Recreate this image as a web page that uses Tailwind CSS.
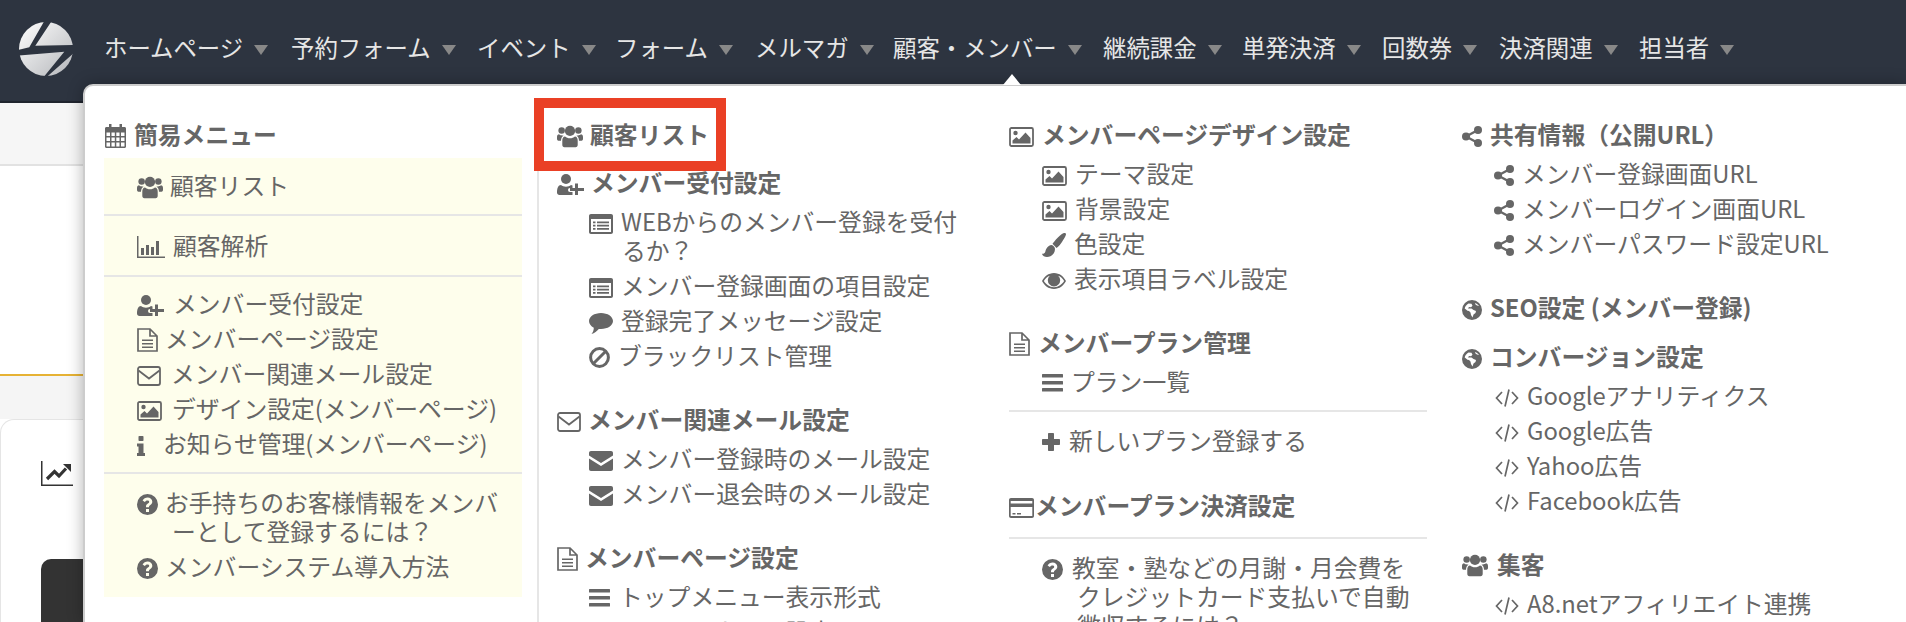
<!DOCTYPE html>
<html lang="ja">
<head>
  <meta charset="UTF-8" />
  <meta name="viewport" content="width=device-width, initial-scale=1.0"/>
  <title>顧客・メンバー</title>
  <script src="https://cdn.jsdelivr.net/npm/@tailwindcss/browser@4"></script>
</head>
<body class="relative h-[622px] overflow-hidden bg-white text-[23.8px] leading-[29px] text-[#666] font-['Noto_Sans_CJK_JP','Noto_Sans',sans-serif]">

  <!-- icon set -->
  <svg class="hidden">
    <symbol id="i-users" viewBox="0 0 28 24"><circle cx="14" cy="6.500" r="5.500"/><circle cx="5" cy="6" r="3.500"/><circle cx="23" cy="6" r="3.500"/><path d="M8 24c-1.500 0-2.300-1-2.300-2.500V17c0-2.500 1-4.500 3-4.500 1.300 1.200 3.200 2 5.300 2s4-.8 5.300-2c2 0 3 2 3 4.500v4.500c0 1.500-.8 2.500-2.300 2.500zM0 13c0-1.500 1-2.800 2.200-2.800 .8 .8 2 1.300 3.300 1.300l1.500-.1C5.500 12.500 4.300 14.300 4.300 17H1.500C.5 17 0 16 0 15zM28 13c0-1.500-1-2.800-2.200-2.800-.8 .8-2 1.300-3.300 1.300l-1.500-.1c1.500 1.100 2.700 2.900 2.700 5.600h2.800c1 0 1.500-1 1.500-2z"/></symbol>
    <symbol id="i-calendar" viewBox="0 0 21 24"><path fill-rule="evenodd" d="M4 0h2.500v3h8V0H17v3h2.500C20.400 3 21 3.600 21 4.500v18c0 .9-.6 1.500-1.500 1.500h-18C.6 24 0 23.400 0 22.500v-18C0 3.600 .6 3 1.500 3H4zM1.500 8.500V12H5V8.500zm5 0V12h3.300V8.500zm4.800 0V12h3.200V8.500zm4.700 0V12h3.500V8.500zm-14.500 5V17H5v-3.500zm5 0V17h3.300v-3.500zm4.800 0V17h3.200v-3.500zm4.700 0V17h3.500v-3.500zm-14.500 5v4H5v-4zm5 0v4h3.300v-4zm4.800 0v4h3.200v-4zm4.700 0v4h3.500v-4z"/></symbol>
    <symbol id="i-user-plus" viewBox="0 0 27 21"><circle cx="9" cy="5" r="5"/><path d="M0 18.500c0-4 1.200-7.500 4-7.500 1.300 1.100 3 1.700 5 1.700s3.700-.6 5-1.700l1.500 .5V14h-2.500a1.800 1.800 0 0 0 0 4h2.500v3H2.500C1 21 0 20 0 18.500z"/><path d="M18 9.500h3v4.500h6v3h-6v4h-3v-4h-5v-3h5z"/></symbol>
    <symbol id="i-file" viewBox="0 0 21 24"><path fill="none" stroke="currentColor" stroke-width="1.700" d="M1 1h12l7 7v15H1zM13 1v7h7"/><path d="M5 11.500h11v1.500H5zM5 15h11v1.500H5zM5 18.500h11V20H5z"/></symbol>
    <symbol id="i-envelope-o" viewBox="0 0 24 20"><rect x="1" y="1" width="22" height="18" rx="2" fill="none" stroke="currentColor" stroke-width="1.800"/><path d="M1.500 4.500 12 12.500 22.500 4.500" fill="none" stroke="currentColor" stroke-width="1.800"/></symbol>
    <symbol id="i-envelope" viewBox="0 0 24 20"><path d="M2 0h20c1.200 0 2 .8 2 2v2.500L12 12 0 4.500V2C0 .8 .8 0 2 0zM0 7.500 12 15 24 7.500V18c0 1.200-.8 2-2 2H2c-1.200 0-2-.8-2-2z"/></symbol>
    <symbol id="i-picture" viewBox="0 0 25 20"><rect x="1" y="1" width="23" height="18" rx="1.500" fill="none" stroke="currentColor" stroke-width="1.800"/><circle cx="6.500" cy="6" r="2.200"/><path d="M3.500 16.500v-3l4-3.500 2.500 2.500 6.500-7 5 5.500v5.500z"/></symbol>
    <symbol id="i-info" viewBox="0 0 8 20"><rect x="1.500" width="5" height="5" rx=".8"/><path d="M0 7.500h6.500V17H8v3H0v-3h1.500v-6.500H0z"/></symbol>
    <symbol id="i-question" viewBox="0 0 21 21"><path fill-rule="evenodd" d="M10.500 0a10.500 10.500 0 1 1 0 21 10.500 10.500 0 0 1 0-21zM9 15v3h3v-3zM10.700 3.500c-2.400 0-4 1-5.100 2.900l2.200 1.600c.7-.9 1.400-1.500 2.600-1.500 1 0 1.800 .5 1.800 1.300 0 1.900-3.200 1.900-3.200 4.700v.8h3v-.5c0-1.700 3.300-2 3.300-5.100 0-2.500-2.200-4.200-4.600-4.200z"/></symbol>
    <symbol id="i-list" viewBox="0 0 24 20"><path fill-rule="evenodd" d="M2 0h20c1.200 0 2 .8 2 2v16c0 1.200-.8 2-2 2H2c-1.200 0-2-.8-2-2V2C0 .8 .8 0 2 0zM2 5v13h20V5zM4 7.500h2.500v1.700H4zm4 0h12v1.700H8zm-4 3.200h2.500v1.700H4zm4 0h12v1.700H8zM4 14h2.500v1.700H4zm4 0h12v1.700H8z"/></symbol>
    <symbol id="i-comment" viewBox="0 0 24 21"><path d="M12 0c6.600 0 12 3.600 12 8s-5.400 8-12 8l-2.200-.1C8 18 5.500 20.300 2.500 21c1.300-1.500 2.200-3.300 2.300-6.300C1.900 13.300 0 10.800 0 8 0 3.600 5.400 0 12 0z"/></symbol>
    <symbol id="i-ban" viewBox="0 0 21 21"><circle cx="10.500" cy="10.500" r="8.900" fill="none" stroke="currentColor" stroke-width="3"/><path d="M4.500 16.500 16.500 4.500" stroke="currentColor" stroke-width="3"/></symbol>
    <symbol id="i-bars" viewBox="0 0 21 18"><rect width="21" height="3.600" rx=".5"/><rect y="7" width="21" height="3.600" rx=".5"/><rect y="14" width="21" height="3.600" rx=".5"/></symbol>
    <symbol id="i-brush" viewBox="0 0 24 24"><path d="M22.500 0c.8 0 1.500 .5 1.500 1.300 0 1-.8 2.500-2.500 5.200-2.500 4-5 7.500-7 8.500l-4-4.200C12 8.500 19.500 0 22.500 0zM9.500 12c2 .6 3.300 2 3.500 4 0 4.500-3.800 8-8 8-2.500 0-4.500-1-5-3.200 1.500 .2 2.700-.3 3.300-2 .9-3.500 2.700-6.300 6.200-6.800z"/></symbol>
    <symbol id="i-eye" viewBox="0 0 24 16"><path fill-rule="evenodd" d="M12 0c5.500 0 9.800 3.600 12 8-2.200 4.400-6.500 8-12 8S2.200 12.400 0 8C2.200 3.600 6.500 0 12 0zM7.800 2.700C5.300 3.600 3.300 5.600 1.900 8c1.900 3.200 5.600 6.200 10.100 6.200S20.200 11.200 22.100 8c-1.400-2.400-3.400-4.400-5.900-5.300A6.200 6.200 0 1 1 7.800 2.700z"/></symbol>
    <symbol id="i-plus" viewBox="0 0 18 18"><path d="M7 0h4c.6 0 1 .4 1 1v5h5c.6 0 1 .4 1 1v4c0 .6-.4 1-1 1h-5v5c0 .6-.4 1-1 1H7c-.6 0-1-.4-1-1v-5H1c-.6 0-1-.4-1-1V7c0-.6 .4-1 1-1h5V1c0-.6 .4-1 1-1z"/></symbol>
    <symbol id="i-card" viewBox="0 0 25 20"><path fill-rule="evenodd" d="M2 0h21c1.200 0 2 .8 2 2v16c0 1.200-.8 2-2 2H2c-1.200 0-2-.8-2-2V2C0 .8 .8 0 2 0zM1.700 3v2.500h21.600V3zm0 6v9h21.600V9zM3.500 15h3v1.500h-3zm4.500 0h4v1.500H8z"/></symbol>
    <symbol id="i-share" viewBox="0 0 20 21"><circle cx="16" cy="4" r="4"/><circle cx="16" cy="17" r="4"/><circle cx="4" cy="10.500" r="4"/><path d="M4 10.500 16 4M4 10.500 16 17" stroke="currentColor" stroke-width="2.400"/></symbol>
    <symbol id="i-globe" viewBox="0 0 20 20"><path fill-rule="evenodd" d="M10 0a10 10 0 1 1 0 20 10 10 0 0 1 0-20zM6.500 3.500C4.500 4.500 3 6.500 2.700 8.500l2.800 2.200 1.500 .3 1.500 1.500.5 2.500 1.500 2.500 1-3 2-1.500.5-2-2.500-1-2-1.500H6l1-1.500 2 .3 1.500-1.500-1-2zM13 3l.5 1.500 1.500 1 2 .5c-.8-1.300-2.300-2.500-4-3z"/></symbol>
    <symbol id="i-code" viewBox="0 0 24 18"><path d="M7 3 1.500 9 7 15M17 3l5.500 6L17 15M14 .5 10 17.500" fill="none" stroke="currentColor" stroke-width="1.700"/></symbol>
    <symbol id="i-chart" viewBox="0 0 28 22"><path d="M0 0h1.500v20.500H28V22H0z"/><path d="M4 12h3v7H4zM9 9h3v10H9zM14 11h3v8h-3zM19 5h3v14h-3z"/></symbol>
    <symbol id="i-line" viewBox="0 0 32 25"><path d="M0 0h1.500v23.500H32V25H0z"/><path d="M6 18l7.500-7.500 4.500 4.500 7-7.500" fill="none" stroke="currentColor" stroke-width="3.200"/><path d="M22 3h8v8z"/></symbol>
  </svg>

  <!-- top nav -->
  <header class="flex items-center h-[103px] bg-[#2d3440] border-b-2 border-[#20252e] text-[23.4px] text-[#e6e6e6]">
    <svg class="ml-[19px] mr-[31px] w-[54px] h-[54px] -mt-[4px]" viewBox="0 0 54 54">
      <defs><linearGradient id="logo-g" x1="0" y1="0" x2="1" y2="1"><stop offset="0" stop-color="#fff"/><stop offset="1" stop-color="#b4b6ba"/></linearGradient></defs>
      <circle cx="27" cy="27" r="27" fill="url(#logo-g)"/>
      <path d="M25.300 -1 32.700 -1 16.300 23.700 57 23 57 29 27.700 55 24.700 55 45.300 29.700 -1.300 33.700 -1.300 28 10.300 25.300Z" fill="#2d3440"/>
    </svg>
    <nav class="flex items-center -mt-[6px]">
      <a class="flex items-center w-[187px]">ホームページ<i class="ml-[11px] border-x-[7px] border-t-[10px] border-x-transparent border-t-[#888] mt-[4px]"></i></a>
      <a class="flex items-center w-[186px]">予約フォーム<i class="ml-[11px] border-x-[7px] border-t-[10px] border-x-transparent border-t-[#888] mt-[4px]"></i></a>
      <a class="flex items-center w-[138px]">イベント<i class="ml-[11px] border-x-[7px] border-t-[10px] border-x-transparent border-t-[#888] mt-[4px]"></i></a>
      <a class="flex items-center w-[140px]">フォーム<i class="ml-[11px] border-x-[7px] border-t-[10px] border-x-transparent border-t-[#888] mt-[4px]"></i></a>
      <a class="flex items-center w-[138px]">メルマガ<i class="ml-[11px] border-x-[7px] border-t-[10px] border-x-transparent border-t-[#888] mt-[4px]"></i></a>
      <a class="flex items-center w-[210px]">顧客・メンバー<i class="ml-[11px] border-x-[7px] border-t-[10px] border-x-transparent border-t-[#888] mt-[4px]"></i></a>
      <a class="flex items-center w-[139px]">継続課金<i class="ml-[11px] border-x-[7px] border-t-[10px] border-x-transparent border-t-[#888] mt-[4px]"></i></a>
      <a class="flex items-center w-[140px]">単発決済<i class="ml-[11px] border-x-[7px] border-t-[10px] border-x-transparent border-t-[#888] mt-[4px]"></i></a>
      <a class="flex items-center w-[117px]">回数券<i class="ml-[11px] border-x-[7px] border-t-[10px] border-x-transparent border-t-[#888] mt-[4px]"></i></a>
      <a class="flex items-center w-[140px]">決済関連<i class="ml-[11px] border-x-[7px] border-t-[10px] border-x-transparent border-t-[#888] mt-[4px]"></i></a>
      <a class="flex items-center">担当者<i class="ml-[11px] border-x-[7px] border-t-[10px] border-x-transparent border-t-[#888] mt-[4px]"></i></a>
    </nav>
  </header>

  <!-- page behind the menu -->
  <div class="h-[63px] bg-[#f6f6f6] border-b-2 border-[#e2e2e2]"></div>
  <div class="h-[210px] border-b-2 border-[#e6b234]"></div>
  <div class="h-[43px] bg-[#f5f5f5]"></div>
  <div class="h-[204px] rounded-tl-[14px] border-t border-l border-[#e5e5e5] bg-white pl-[40px] pt-[41px]">
    <svg class="w-[32px] h-[25px] fill-[#333] text-[#333]"><use href="#i-line"/></svg>
    <div class="mt-[73px] h-[80px] w-[60px] rounded-tl-[10px] bg-[#333]"></div>
  </div>

  <!-- dropdown panel -->
  <div class="absolute left-[83px] right-0 top-[84px] h-[538px] overflow-hidden rounded-tl-[10px] border-l-2 border-t-2 border-[#ccc] bg-white pl-[19px] pt-[33px] shadow-[0_0_16px_rgba(0,0,0,0.3)]">
    <div class="grid grid-cols-[433px_472px_453px_1fr] fill-[#666]">

      <!-- col 1 -->
      <div>
        <h3 class="h-[29px] mb-[10px] font-bold"><svg class="inline-block align-[-4px] mr-[7px] w-[23px] h-[24px]"><use href="#i-calendar"/></svg>簡易メニュー</h3>
        <div class="w-[418px] bg-[#fefeec] divide-y-2 divide-[#e6e6e6]">
          <ul class="pl-[33px] pt-[9px] pb-[12px]">
            <li class="py-[3px]"><svg class="inline-block align-[-4px] mr-[7px] w-[26px] h-[24px]"><use href="#i-users"/></svg>顧客リスト</li>
          </ul>
          <ul class="pl-[33px] pt-[11px] pb-[13px]">
            <li class="py-[3px]"><svg class="inline-block align-[-3px] mr-[8px] w-[28px] h-[22px]"><use href="#i-chart"/></svg>顧客解析</li>
          </ul>
          <ul class="pl-[33px] pt-[8px] pb-[12px]">
            <li class="py-[3px]"><svg class="inline-block align-[-3px] mr-[9px] w-[27px] h-[21px]"><use href="#i-user-plus"/></svg>メンバー受付設定</li>
            <li class="py-[3px]"><svg class="inline-block align-[-4px] mr-[7px] w-[21px] h-[24px]"><use href="#i-file"/></svg>メンバーページ設定</li>
            <li class="py-[3px]"><svg class="inline-block align-[-3px] mr-[10px] w-[24px] h-[20px]"><use href="#i-envelope-o"/></svg>メンバー関連メール設定</li>
            <li class="py-[3px]"><svg class="inline-block align-[-3px] mr-[10px] w-[25px] h-[20px]"><use href="#i-picture"/></svg>デザイン設定(メンバーページ)</li>
            <li class="py-[3px]"><svg class="inline-block align-[-3px] mr-[18px] w-[8px] h-[20px]"><use href="#i-info"/></svg>お知らせ管理(メンバーページ)</li>
          </ul>
          <ul class="pl-[33px] pt-[10px] pb-[14px]">
            <li class="py-[3px] pl-[35px] indent-[-35px]"><svg class="inline-block align-[-3px] mr-[7px] w-[21px] h-[21px]"><use href="#i-question"/></svg>お手持ちのお客様情報をメンバ<br>ーとして登録するには？</li>
            <li class="py-[3px]"><svg class="inline-block align-[-3px] mr-[7px] w-[21px] h-[21px]"><use href="#i-question"/></svg>メンバーシステム導入方法</li>
          </ul>
        </div>
      </div>

      <!-- col 2 -->
      <div class="border-l-2 border-[#e6e6e6] pl-[18px] pr-[14px]">
        <h3 class="h-[29px] mb-[19px] font-bold"><svg class="inline-block align-[-4px] mr-[7px] w-[26px] h-[24px]"><use href="#i-users"/></svg>顧客リスト</h3>
        <h3 class="h-[29px] mb-[7px] font-bold"><svg class="inline-block align-[-3px] mr-[7px] w-[27px] h-[21px]"><use href="#i-user-plus"/></svg>メンバー受付設定</h3>
        <ul class="pl-[32px] mb-[32px]">
          <li class="py-[3px] pl-[33px] indent-[-33px]"><svg class="inline-block align-[-3px] mr-[8px] w-[24px] h-[20px]"><use href="#i-list"/></svg>WEBからのメンバー登録を受付<br>るか？</li>
          <li class="py-[3px]"><svg class="inline-block align-[-3px] mr-[8px] w-[24px] h-[20px]"><use href="#i-list"/></svg>メンバー登録画面の項目設定</li>
          <li class="py-[3px]"><svg class="inline-block align-[-4px] mr-[8px] w-[24px] h-[21px]"><use href="#i-comment"/></svg>登録完了メッセージ設定</li>
          <li class="py-[3px]"><svg class="inline-block align-[-3px] mr-[8px] w-[21px] h-[21px]"><use href="#i-ban"/></svg>ブラックリスト管理</li>
        </ul>
        <h3 class="h-[29px] mb-[7px] font-bold"><svg class="inline-block align-[-3px] mr-[7px] w-[24px] h-[20px]"><use href="#i-envelope-o"/></svg>メンバー関連メール設定</h3>
        <ul class="pl-[32px] mb-[32px]">
          <li class="py-[3px]"><svg class="inline-block align-[-3px] mr-[8px] w-[24px] h-[20px]"><use href="#i-envelope"/></svg>メンバー登録時のメール設定</li>
          <li class="py-[3px]"><svg class="inline-block align-[-3px] mr-[8px] w-[24px] h-[20px]"><use href="#i-envelope"/></svg>メンバー退会時のメール設定</li>
        </ul>
        <h3 class="h-[29px] mb-[7px] font-bold"><svg class="inline-block align-[-4px] mr-[7px] w-[21px] h-[24px]"><use href="#i-file"/></svg>メンバーページ設定</h3>
        <ul class="pl-[32px]">
          <li class="py-[3px]"><svg class="inline-block align-[-1px] mr-[9px] w-[21px] h-[18px]"><use href="#i-bars"/></svg>トップメニュー表示形式</li>
          <li class="py-[3px]"><svg class="inline-block align-[-1px] mr-[9px] w-[21px] h-[18px]"><use href="#i-bars"/></svg>テーマ・カラー設定</li>
        </ul>
      </div>

      <!-- col 3 -->
      <div class="pr-[35px]">
        <h3 class="h-[29px] mb-[7px] font-bold"><svg class="inline-block align-[-3px] mr-[8px] w-[25px] h-[20px]"><use href="#i-picture"/></svg>メンバーページデザイン設定</h3>
        <ul class="pl-[33px] mb-[32px]">
          <li class="py-[3px]"><svg class="inline-block align-[-3px] mr-[8px] w-[25px] h-[20px]"><use href="#i-picture"/></svg>テーマ設定</li>
          <li class="py-[3px]"><svg class="inline-block align-[-3px] mr-[8px] w-[25px] h-[20px]"><use href="#i-picture"/></svg>背景設定</li>
          <li class="py-[3px]"><svg class="inline-block align-[-4px] mr-[8px] w-[24px] h-[24px]"><use href="#i-brush"/></svg>色設定</li>
          <li class="py-[3px]"><svg class="inline-block align-[-1px] mr-[8px] w-[24px] h-[16px]"><use href="#i-eye"/></svg>表示項目ラベル設定</li>
        </ul>
        <h3 class="h-[29px] mb-[7px] font-bold"><svg class="inline-block align-[-4px] mr-[8px] w-[21px] h-[24px]"><use href="#i-file"/></svg>メンバープラン管理</h3>
        <ul class="pl-[33px] mb-[12px]">
          <li class="py-[3px]"><svg class="inline-block align-[-1px] mr-[8px] w-[21px] h-[18px]"><use href="#i-bars"/></svg>プラン一覧</li>
        </ul>
        <hr class="border-t-2 border-[#e6e6e6]" />
        <ul class="pl-[33px] mt-[10px] mb-[33px]">
          <li class="py-[3px]"><svg class="inline-block align-[-1px] mr-[9px] w-[18px] h-[18px]"><use href="#i-plus"/></svg>新しいプラン登録する</li>
        </ul>
        <h3 class="h-[29px] mb-[18px] font-bold"><svg class="inline-block align-[-3px] mr-[1px] w-[25px] h-[20px]"><use href="#i-card"/></svg>メンバープラン決済設定</h3>
        <hr class="border-t-2 border-[#e6e6e6]" />
        <ul class="pl-[33px] mt-[10px]">
          <li class="py-[3px] pl-[35px] indent-[-35px]"><svg class="inline-block align-[-3px] mr-[9px] w-[21px] h-[21px]"><use href="#i-question"/></svg>教室・塾などの月謝・月会費を<br>クレジットカード支払いで自動<br>徴収するには？</li>
        </ul>
      </div>

      <!-- col 4 -->
      <div>
        <h3 class="h-[29px] mb-[7px] font-bold"><svg class="inline-block align-[-3px] mr-[8px] w-[20px] h-[21px]"><use href="#i-share"/></svg>共有情報（公開URL）</h3>
        <ul class="pl-[32px] mb-[32px]">
          <li class="py-[3px]"><svg class="inline-block align-[-3px] mr-[8px] w-[20px] h-[21px]"><use href="#i-share"/></svg>メンバー登録画面URL</li>
          <li class="py-[3px]"><svg class="inline-block align-[-3px] mr-[8px] w-[20px] h-[21px]"><use href="#i-share"/></svg>メンバーログイン画面URL</li>
          <li class="py-[3px]"><svg class="inline-block align-[-3px] mr-[8px] w-[20px] h-[21px]"><use href="#i-share"/></svg>メンバーパスワード設定URL</li>
        </ul>
        <h3 class="h-[29px] mb-[20px] font-bold"><svg class="inline-block align-[-3px] mr-[8px] w-[20px] h-[20px]"><use href="#i-globe"/></svg>SEO設定 (メンバー登録)</h3>
        <h3 class="h-[29px] mb-[7px] font-bold"><svg class="inline-block align-[-3px] mr-[8px] w-[20px] h-[20px]"><use href="#i-globe"/></svg>コンバージョン設定</h3>
        <ul class="pl-[33px] mb-[32px]">
          <li class="py-[3px]"><svg class="inline-block align-[-2px] mr-[8px] w-[24px] h-[18px]"><use href="#i-code"/></svg>Googleアナリティクス</li>
          <li class="py-[3px]"><svg class="inline-block align-[-2px] mr-[8px] w-[24px] h-[18px]"><use href="#i-code"/></svg>Google広告</li>
          <li class="py-[3px]"><svg class="inline-block align-[-2px] mr-[8px] w-[24px] h-[18px]"><use href="#i-code"/></svg>Yahoo広告</li>
          <li class="py-[3px]"><svg class="inline-block align-[-2px] mr-[8px] w-[24px] h-[18px]"><use href="#i-code"/></svg>Facebook広告</li>
        </ul>
        <h3 class="h-[29px] mb-[7px] font-bold"><svg class="inline-block align-[-3px] mr-[9px] w-[26px] h-[24px]"><use href="#i-users"/></svg>集客</h3>
        <ul class="pl-[33px]">
          <li class="py-[3px]"><svg class="inline-block align-[-2px] mr-[8px] w-[24px] h-[18px]"><use href="#i-code"/></svg>A8.netアフィリエイト連携</li>
        </ul>
      </div>
    </div>
  </div>

  <!-- caret on the open nav item -->
  <div class="absolute left-[1003px] top-[74px] border-x-[9px] border-b-[11px] border-x-transparent border-b-white"></div>

  <!-- red annotation box -->
  <div class="absolute left-[534px] top-[98px] w-[192px] h-[73px] border-[10px] border-[#ea4025]"></div>
</body>
</html>
